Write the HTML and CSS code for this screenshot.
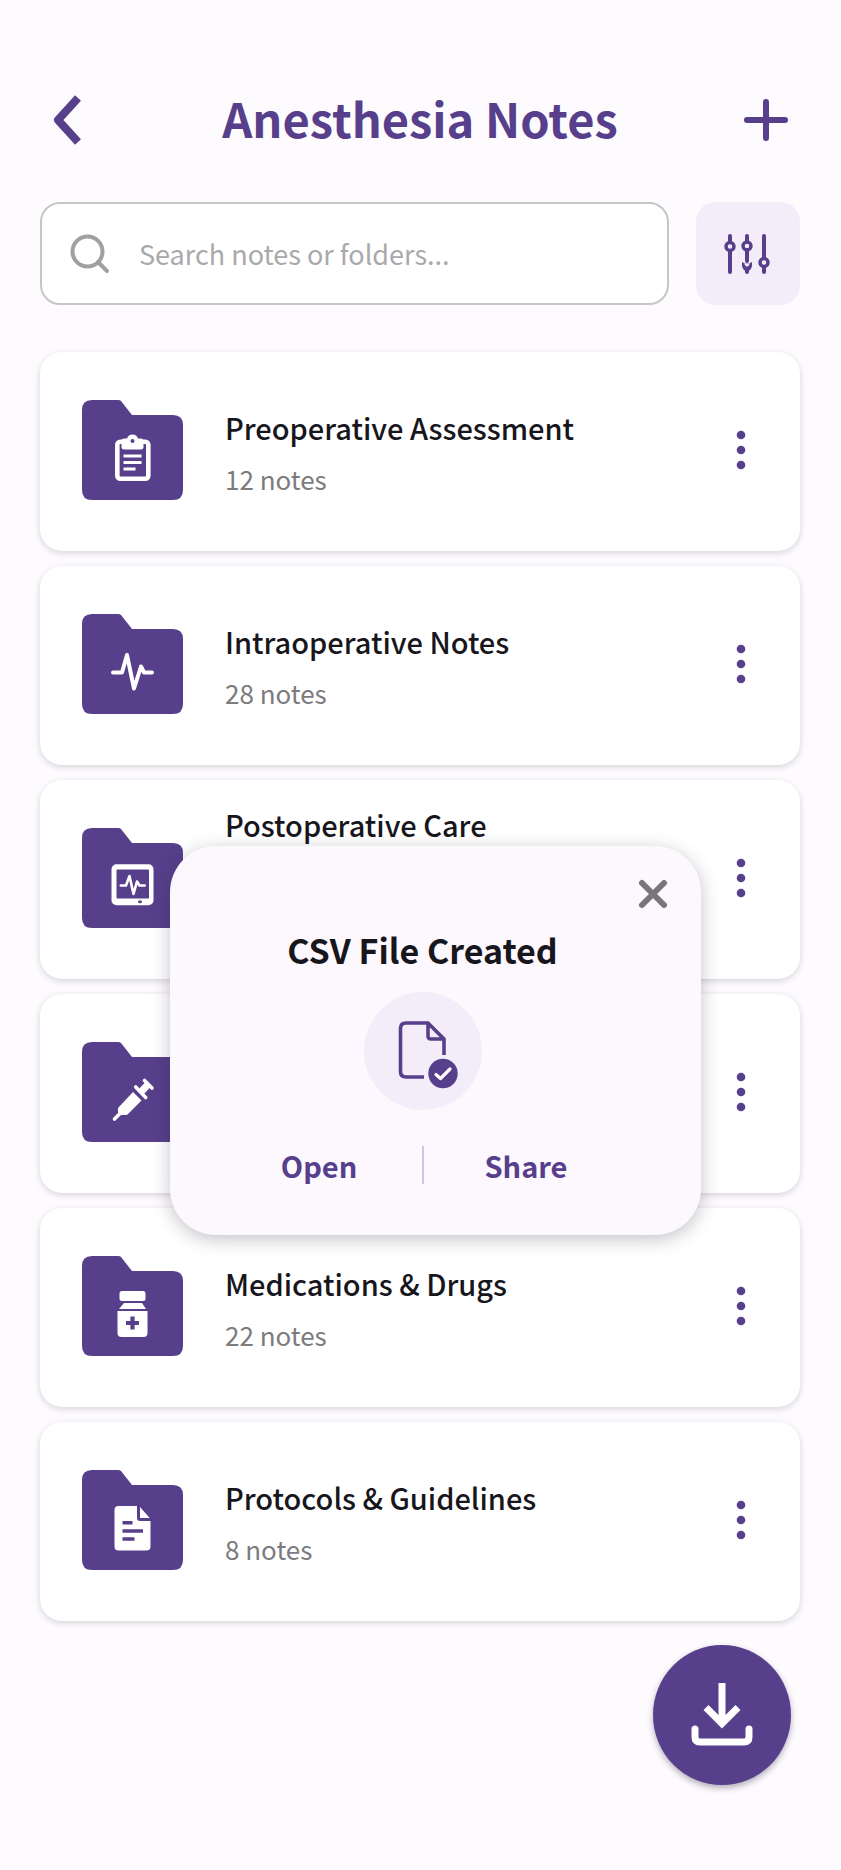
FILE: index.html
```html
<!DOCTYPE html>
<html lang="en">
<head>
<meta charset="utf-8">
<meta name="viewport" content="width=device-width, initial-scale=1">
<title>Anesthesia Notes</title>
<link rel="stylesheet" href="styles.css">
</head>
<body>
<div class="page">
  <header class="topbar">
    <button class="icon-button" type="button" aria-label="Back">
      <svg width="48" height="60" viewBox="0 0 48 60"><path class="stroke" stroke-width="8" stroke-linejoin="round" d="M38 8 18 30 38 52"/></svg>
    </button>
    <h1 class="topbar-title">Anesthesia Notes</h1>
    <button class="icon-button" type="button" aria-label="Add">
      <svg width="68" height="60" viewBox="0 0 68 60"><path class="stroke round" stroke-width="6" d="M34 12V48M15 30H53"/></svg>
    </button>
  </header>

  <div class="tools">
    <label class="search">
      <svg width="40" height="40" viewBox="0 0 40 40"><circle class="search-stroke" cx="17.500" cy="17.500" r="15"/><path class="search-stroke" d="M28 28 37 37"/></svg>
      <input class="search-input" type="search" placeholder="Search notes or folders..." aria-label="Search notes or folders">
    </label>
    <button class="filter" type="button" aria-label="Filter">
      <svg width="50" height="44" viewBox="0 0 50 44">
        <path class="stroke round" stroke-width="4" d="M8 4V10M8 19V40M25 4V9M25 18V29M25 37V40M42 4V26M42 35V40"/>
        <g class="stroke" stroke-width="3.400"><circle cx="8" cy="14.500" r="4"/><circle cx="25" cy="14" r="4"/><circle cx="42" cy="30.500" r="4"/></g>
        <path class="solid" d="M20 30q5 3 10 0v4q-1 5-5 5t-5-5z"/><path class="knob-light" d="M22 31.500h6l-2 3h-2z"/>
      </svg>
    </button>
  </div>

  <main class="folders">
    <article class="card">
      <svg class="folder" viewBox="0 0 102 100">
        <use href="#folder"/>
        <rect class="line" x="35.300" y="41.800" width="31" height="37" rx="3" stroke-width="4.600"/>
        <path class="fill" d="M39.500 41q0-2.500 3-2.500h2.500a5.800 5.800 0 0 1 11 0h2.500q3 0 3 2.500v6q0 2.500-3 2.500h-16q-3 0-3-2.500z"/>
        <circle class="solid" cx="50.500" cy="41" r="2"/>
        <path class="line" stroke-width="3" d="M41.500 56H59.500M41.500 62.500H59.500M41.500 69H53.500"/>
      </svg>
      <div class="card-text"><h2 class="card-title">Preoperative Assessment</h2><p class="card-count">12 notes</p></div>
      <button class="more" type="button" aria-label="More options"><svg width="10" height="40" viewBox="0 0 10 40"><use href="#dots"/></svg></button>
    </article>

    <article class="card">
      <svg class="folder" viewBox="0 0 102 100">
        <use href="#folder"/>
        <path class="line round" stroke-width="4" d="M31 58.500H40L45 41 52 74.500 59 52.500 62 58.500H70"/>
      </svg>
      <div class="card-text"><h2 class="card-title">Intraoperative Notes</h2><p class="card-count">28 notes</p></div>
      <button class="more" type="button" aria-label="More options"><svg width="10" height="40" viewBox="0 0 10 40"><use href="#dots"/></svg></button>
    </article>

    <article class="card">
      <svg class="folder" viewBox="0 0 102 100">
        <use href="#folder"/>
        <rect class="fill" x="29.500" y="36.300" width="42" height="41" rx="5"/>
        <rect class="solid" x="34.500" y="41.500" width="32.500" height="29" rx="1"/>
        <ellipse class="solid" cx="58" cy="73.800" rx="2" ry="1.500"/>
        <path class="line round" stroke-width="2.600" d="M38.800 57.500H44L47.500 48 51.500 66 55 53.500 57.500 57.500H62.700"/>
      </svg>
      <div class="card-text card-text-top"><h2 class="card-title">Postoperative Care</h2></div>
      <button class="more" type="button" aria-label="More options"><svg width="10" height="40" viewBox="0 0 10 40"><use href="#dots"/></svg></button>
    </article>

    <article class="card">
      <svg class="folder" viewBox="0 0 102 100">
        <use href="#folder"/>
        <path class="line round" stroke-width="3.600" d="M32.500 77 39 70.500M53.700 45 63.700 55.500M62.500 38.500 70 46"/>
        <path class="line" stroke-width="7" d="M58 51 66 42.500"/>
        <path class="fill" d="M36 72V66L51 50 59.500 58.500 45.500 72.500 44 73H37z"/>
      </svg>
      <div class="card-text"></div>
      <button class="more" type="button" aria-label="More options"><svg width="10" height="40" viewBox="0 0 10 40"><use href="#dots"/></svg></button>
    </article>

    <article class="card">
      <svg class="folder" viewBox="0 0 102 100">
        <use href="#folder"/>
        <rect class="fill" x="37.500" y="35" width="26" height="10" rx="2.500"/>
        <path class="fill" d="M42 47H60L64 53H37z"/>
        <path class="fill" d="M35.500 55h30v22q0 4-4 4h-22q-4 0-4-4z"/>
        <path class="stroke" stroke-width="4.200" d="M50.500 60.500V73.500M44 67H57"/>
      </svg>
      <div class="card-text"><h2 class="card-title">Medications &amp; Drugs</h2><p class="card-count">22 notes</p></div>
      <button class="more" type="button" aria-label="More options"><svg width="10" height="40" viewBox="0 0 10 40"><use href="#dots"/></svg></button>
    </article>

    <article class="card">
      <svg class="folder" viewBox="0 0 102 100">
        <use href="#folder"/>
        <path class="fill" d="M36.500 36H55V48q0 3 3 3H68.500V76.500q0 4-4 4h-28q-4 0-4-4V40q0-4 4-4z"/>
        <path class="fill" d="M58 37 67.700 48H58z"/>
        <path class="stroke" stroke-width="3.600" d="M40.500 52.700H50.500M40.500 61H61M40.500 69H52.500"/>
      </svg>
      <div class="card-text"><h2 class="card-title">Protocols &amp; Guidelines</h2><p class="card-count">8 notes</p></div>
      <button class="more" type="button" aria-label="More options"><svg width="10" height="40" viewBox="0 0 10 40"><use href="#dots"/></svg></button>
    </article>
  </main>

  <button class="download" type="button" aria-label="Download">
    <svg width="138" height="140" viewBox="0 0 138 140">
      <path class="line" stroke-width="7" stroke-linejoin="miter" d="M69 38V78M53 62.500 69 78.500 85 62.500"/>
      <path class="line round" stroke-width="7" d="M42 84V92q0 5 5 5H91q5 0 5-5V84"/>
    </svg>
  </button>

  <section class="dialog" role="dialog" aria-labelledby="dialog-title">
    <button class="dialog-close" type="button" aria-label="Close">
      <svg width="32" height="32" viewBox="0 0 32 32"><path d="M5 5 27 27M27 5 5 27"/></svg>
    </button>
    <div class="dialog-body">
      <h2 class="dialog-title" id="dialog-title">CSV File Created</h2>
      <svg class="dialog-icon" viewBox="0 0 118 118">
        <path class="stroke" stroke-width="3.600" d="M60 85H42q-5.500 0-5.500-5.500V36.500q0-5.500 5.500-5.500H64L80 47V63M64 31V44q0 3 3 3H80"/>
        <circle class="solid" cx="79" cy="81.500" r="14.700"/>
        <path class="line round" stroke-width="3.200" d="M72 82.500 76.500 86.500 86 77"/>
      </svg>
      <div class="dialog-actions">
        <button class="action" type="button">Open</button>
        <span class="divider"></span>
        <button class="action" type="button">Share</button>
      </div>
    </div>
  </section>
</div>

<svg class="symbols" width="0" height="0" aria-hidden="true">
  <defs>
    <path id="folder" class="solid" d="M10 0H36q2 0 3 1L50 15H91q10 0 10 10V90q0 10-10 10H10Q0 100 0 90V10Q0 0 10 0z"/>
    <g id="dots" class="solid"><circle cx="5" cy="5" r="4.300"/><circle cx="5" cy="20" r="4.300"/><circle cx="5" cy="35" r="4.300"/></g>
  </defs>
</svg>
</body>
</html>
```

FILE: styles.css
```css
:root {
  --purple: #573f8b;
  --tint: #f2edf9;
  --ink: #17161c;
  --grey: #7b7b80;
}

* {
  box-sizing: border-box;
}

body {
  margin: 0;
  background: #fdfbfe;
  color: var(--ink);
  font-family: "Noto Sans CJK SC", "Noto Sans", sans-serif;
}

h1, h2, p {
  margin: 0;
}

button {
  padding: 0;
  border: 0;
  background: none;
  color: inherit;
  font: inherit;
  cursor: pointer;
}

svg {
  display: block;
  flex: none;
}

.symbols {
  position: absolute;
}

.solid { fill: var(--purple); }
.fill { fill: #fff; }
.stroke { fill: none; stroke: var(--purple); }
.line { fill: none; stroke: #fff; }
.round { stroke-linecap: round; stroke-linejoin: round; }
.knob-light { fill: var(--tint); }

.page {
  position: relative;
  display: flex;
  flex-direction: column;
  min-height: 100vh;
  padding: 80px 41px 84px 40px;
}

.topbar {
  display: grid;
  grid-template-columns: 68px 1fr 68px;
  align-items: center;
  height: 80px;
}

.topbar-title {
  padding-bottom: 4px;
  color: var(--purple);
  font-size: 47px;
  font-weight: 700;
  line-height: 76px;
  text-align: center;
  white-space: nowrap;
}

.tools {
  display: flex;
  gap: 27px;
  margin-top: 42px;
}

.search {
  display: flex;
  flex: 1;
  align-items: center;
  gap: 29px;
  min-width: 0;
  height: 103px;
  padding: 0 28px;
  border: 2px solid #c6c6c9;
  border-radius: 20px;
  background: #fff;
}

.search-stroke {
  fill: none;
  stroke: #a0a0a3;
  stroke-width: 4;
  stroke-linecap: round;
}

.search-input {
  flex: 1;
  min-width: 0;
  padding: 0;
  border: 0;
  outline: 0;
  background: none;
  color: var(--ink);
  font: inherit;
  font-size: 27px;
  line-height: 44px;
}

.search-input::placeholder {
  color: #a9a9ac;
  opacity: 1;
}

.filter {
  display: grid;
  place-items: center;
  width: 104px;
  height: 103px;
  padding-right: 3px;
  border-radius: 20px;
  background: var(--tint);
}

.folders {
  display: flex;
  flex-direction: column;
  gap: 15px;
  margin-top: 47px;
}

.card {
  display: flex;
  align-items: center;
  min-height: 199px;
  padding: 0 54px 4px 42px;
  border-radius: 22px;
  background: #fff;
  box-shadow: 0 2px 6px rgba(60, 55, 75, 0.2);
}

.folder {
  width: 102px;
  height: 100px;
}

.card-text {
  flex: 1;
  min-width: 0;
  padding: 6px 0 0 41px;
}

.card-text-top {
  align-self: flex-start;
  padding-top: 18px;
}

.card-title {
  font-size: 29px;
  font-weight: 500;
  line-height: 52px;
}

.card-count {
  color: var(--grey);
  font-size: 26px;
  line-height: 52px;
}

.more {
  padding: 0;
}

.download {
  align-self: flex-end;
  width: 138px;
  height: 140px;
  margin: 24px 9px 0 0;
  border-radius: 50%;
  background: var(--purple);
  box-shadow: 0 3px 6px rgba(40, 30, 60, 0.35);
}

.dialog {
  position: absolute;
  top: 846px;
  right: 140px;
  left: 170px;
  padding: 32px 32px 46px;
  border-radius: 46px;
  background: #fcf8fe;
  box-shadow: 0 4px 18px rgba(40, 35, 55, 0.28);
}

.dialog-close {
  display: block;
  margin-left: auto;
}

.dialog-close path {
  stroke: #77777a;
  stroke-width: 6;
  stroke-linecap: round;
}

.dialog-body {
  display: flex;
  flex-direction: column;
  align-items: center;
  padding: 12px 26px 0 0;
}

.dialog-title {
  font-size: 34px;
  font-weight: 700;
  line-height: 56px;
}

.dialog-icon {
  width: 118px;
  height: 118px;
  margin-top: 14px;
  border-radius: 50%;
  background: var(--tint);
}

.dialog-actions {
  display: grid;
  grid-template-columns: 1fr 2px 1fr;
  align-items: center;
  gap: 61px;
  margin-top: 31px;
}

.action {
  color: var(--purple);
  font-size: 29px;
  font-weight: 700;
  line-height: 48px;
}

.divider {
  height: 38px;
  background: #cfc6e2;
}
```
